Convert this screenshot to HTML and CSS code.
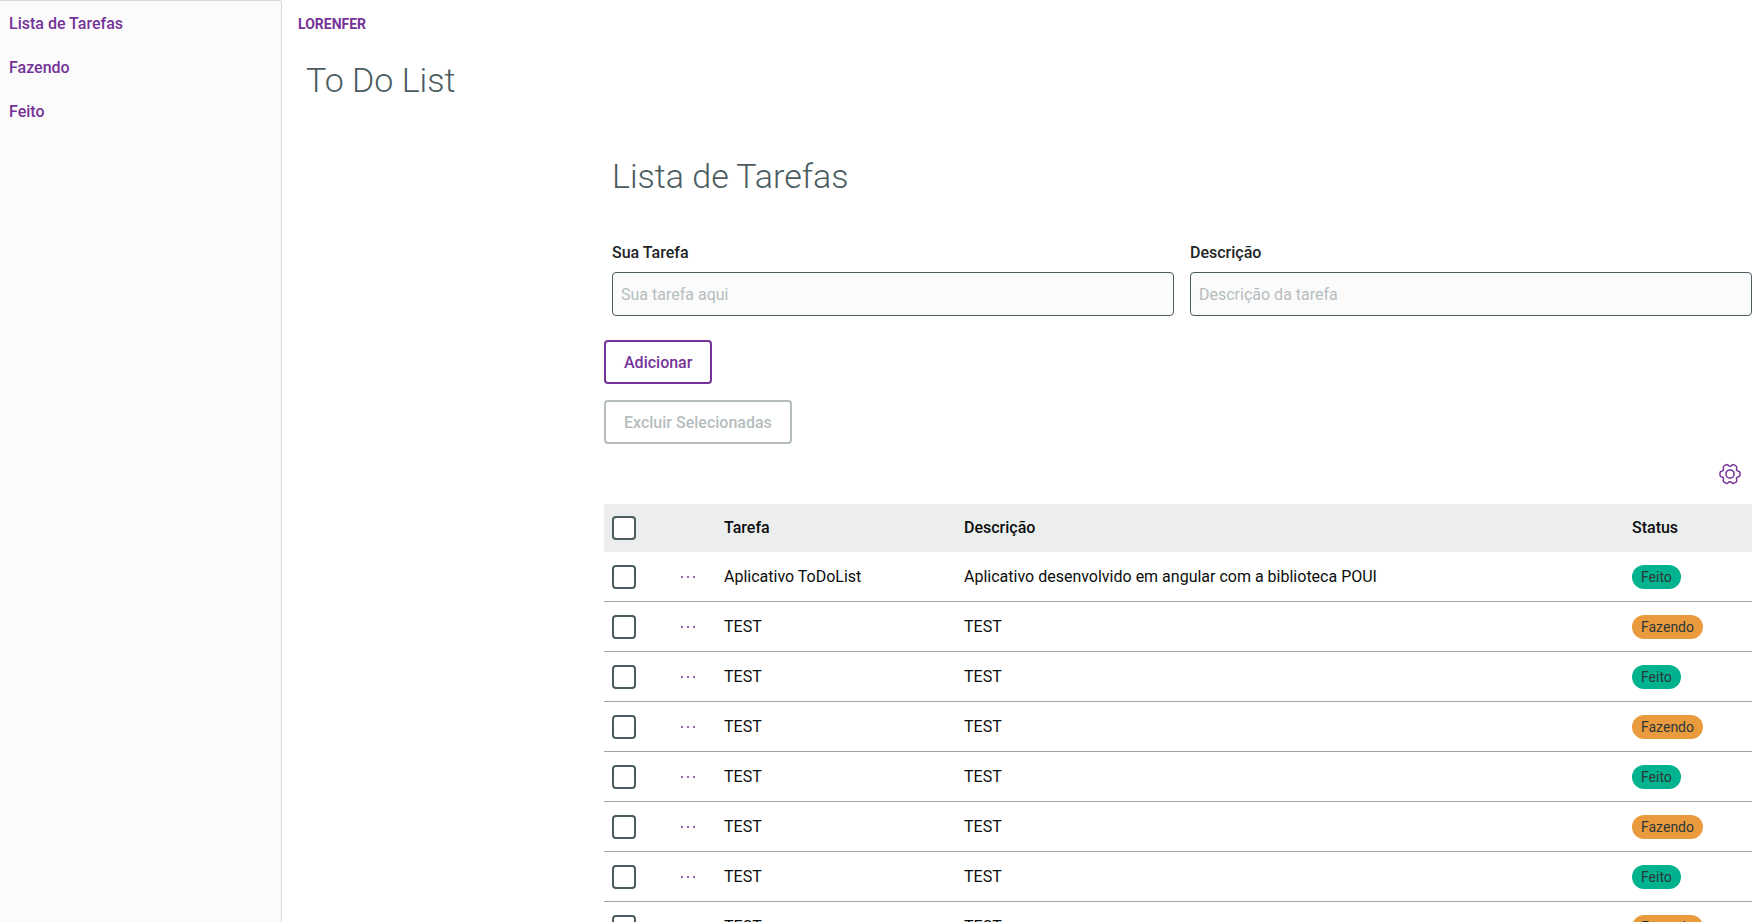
FILE: index.html
```html
<!DOCTYPE html>
<html lang="pt-BR">
<head>
<meta charset="utf-8">
<title>To Do List</title>
<link rel="stylesheet" href="styles.css">
</head>
<body>
<div class="app">
  <nav class="sidebar">
    <a class="menu-item" href="#lista">Lista de Tarefas</a>
    <a class="menu-item" href="#fazendo">Fazendo</a>
    <a class="menu-item" href="#feito">Feito</a>
  </nav>
  <main class="main">
    <header class="toolbar">LORENFER</header>
    <h1 class="title page-title">To Do List</h1>
    <section class="content" id="lista">
      <h2 class="title">Lista de Tarefas</h2>
      <form class="form">
        <div class="field">
          <label class="label" for="tarefa">Sua Tarefa</label>
          <input class="input" id="tarefa" type="text" placeholder="Sua tarefa aqui">
        </div>
        <div class="field">
          <label class="label" for="descricao">Descrição</label>
          <input class="input" id="descricao" type="text" placeholder="Descrição da tarefa">
        </div>
      </form>
      <div class="actions">
        <button class="button" type="button">Adicionar</button>
        <button class="button" type="button" disabled>Excluir Selecionadas</button>
      </div>
      <div class="table-tools">
        <button class="icon-button" type="button" aria-label="Configurar colunas">
          <svg class="gear" viewBox="-12 -12 24 24" aria-hidden="true">
            <defs><path id="tooth" d="M10 -1V1Q10 2.3 8.6 2.8Q5.7 3.3 6.7 6.1Q7 7.5 5.9 8.2"/></defs>
            <use href="#tooth"/>
            <use href="#tooth" transform="rotate(60)"/>
            <use href="#tooth" transform="rotate(120)"/>
            <use href="#tooth" transform="rotate(180)"/>
            <use href="#tooth" transform="rotate(240)"/>
            <use href="#tooth" transform="rotate(300)"/>
            <circle r="4.1"/>
          </svg>
        </button>
      </div>
      <table class="table">
        <colgroup><col class="col-check"><col class="col-menu"><col class="col-task"><col><col class="col-status"></colgroup>
        <thead>
          <tr><th><input class="check" type="checkbox" aria-label="Selecionar todas"></th><th></th><th>Tarefa</th><th>Descrição</th><th>Status</th></tr>
        </thead>
        <tbody>
          <tr><td><input class="check" type="checkbox" aria-label="Selecionar tarefa"></td><td><button class="more" type="button" aria-label="Ações"><svg class="dots" viewBox="0 0 16 4"><circle cx="2" cy="2" r="1"/><circle cx="8" cy="2" r="1"/><circle cx="14" cy="2" r="1"/></svg></button></td><td>Aplicativo ToDoList</td><td>Aplicativo desenvolvido em angular com a biblioteca POUI</td><td><span class="tag done">Feito</span></td></tr>
          <tr><td><input class="check" type="checkbox" aria-label="Selecionar tarefa"></td><td><button class="more" type="button" aria-label="Ações"><svg class="dots" viewBox="0 0 16 4"><circle cx="2" cy="2" r="1"/><circle cx="8" cy="2" r="1"/><circle cx="14" cy="2" r="1"/></svg></button></td><td>TEST</td><td>TEST</td><td><span class="tag doing">Fazendo</span></td></tr>
          <tr><td><input class="check" type="checkbox" aria-label="Selecionar tarefa"></td><td><button class="more" type="button" aria-label="Ações"><svg class="dots" viewBox="0 0 16 4"><circle cx="2" cy="2" r="1"/><circle cx="8" cy="2" r="1"/><circle cx="14" cy="2" r="1"/></svg></button></td><td>TEST</td><td>TEST</td><td><span class="tag done">Feito</span></td></tr>
          <tr><td><input class="check" type="checkbox" aria-label="Selecionar tarefa"></td><td><button class="more" type="button" aria-label="Ações"><svg class="dots" viewBox="0 0 16 4"><circle cx="2" cy="2" r="1"/><circle cx="8" cy="2" r="1"/><circle cx="14" cy="2" r="1"/></svg></button></td><td>TEST</td><td>TEST</td><td><span class="tag doing">Fazendo</span></td></tr>
          <tr><td><input class="check" type="checkbox" aria-label="Selecionar tarefa"></td><td><button class="more" type="button" aria-label="Ações"><svg class="dots" viewBox="0 0 16 4"><circle cx="2" cy="2" r="1"/><circle cx="8" cy="2" r="1"/><circle cx="14" cy="2" r="1"/></svg></button></td><td>TEST</td><td>TEST</td><td><span class="tag done">Feito</span></td></tr>
          <tr><td><input class="check" type="checkbox" aria-label="Selecionar tarefa"></td><td><button class="more" type="button" aria-label="Ações"><svg class="dots" viewBox="0 0 16 4"><circle cx="2" cy="2" r="1"/><circle cx="8" cy="2" r="1"/><circle cx="14" cy="2" r="1"/></svg></button></td><td>TEST</td><td>TEST</td><td><span class="tag doing">Fazendo</span></td></tr>
          <tr><td><input class="check" type="checkbox" aria-label="Selecionar tarefa"></td><td><button class="more" type="button" aria-label="Ações"><svg class="dots" viewBox="0 0 16 4"><circle cx="2" cy="2" r="1"/><circle cx="8" cy="2" r="1"/><circle cx="14" cy="2" r="1"/></svg></button></td><td>TEST</td><td>TEST</td><td><span class="tag done">Feito</span></td></tr>
          <tr><td><input class="check" type="checkbox" aria-label="Selecionar tarefa"></td><td><button class="more" type="button" aria-label="Ações"><svg class="dots" viewBox="0 0 16 4"><circle cx="2" cy="2" r="1"/><circle cx="8" cy="2" r="1"/><circle cx="14" cy="2" r="1"/></svg></button></td><td>TEST</td><td>TEST</td><td><span class="tag doing">Fazendo</span></td></tr>
        </tbody>
      </table>
    </section>
  </main>
</div>
</body>
</html>
```
FILE: styles.css
```css
* { box-sizing: border-box; }

body {
  margin: 0;
  background: #fff;
  color: #0b0d0d;
  font: 400 16px/24px Roboto, sans-serif;
}

.app {
  display: flex;
  height: 100vh;
  overflow: hidden;
}

.sidebar {
  flex: 0 0 282px;
  background: #fbfbfb;
  border: 1px solid #d5d9da;
  border-width: 1px 1px 0 0;
  border-top-right-radius: 4px;
}

.menu-item {
  display: block;
  padding: 11px 9px 9px;
  color: #753399;
  font-weight: 500;
  text-decoration: none;
}

.main {
  flex: 1;
  min-width: 0;
  padding-left: 16px;
}

.toolbar {
  padding: 12px 0;
  color: #753399;
  font-size: 14px;
  font-weight: 700;
}

.title {
  margin: 0;
  padding: 0 8px;
  color: #4a5c60;
  font-size: 34px;
  font-weight: 350;
  line-height: 40px;
}

.page-title { padding-top: 12px; }

.content {
  margin-left: 306px;
  padding-top: 56px;
}

.form {
  display: grid;
  grid-template-columns: 1fr 1fr;
  gap: 16px;
  padding: 45px 0 24px 8px;
}

.field {
  display: flex;
  flex-direction: column;
  gap: 7px;
}

.label {
  color: #1d2426;
  font-weight: 500;
}

.input {
  width: 100%;
  height: 44px;
  padding: 0 8px;
  background: #fbfbfb;
  border: 1px solid #4a5c60;
  border-radius: 4px;
  font: inherit;
}

.input::placeholder { color: #b6bdbf; }

.actions {
  display: flex;
  flex-direction: column;
  align-items: flex-start;
  gap: 16px;
}

.button {
  height: 44px;
  padding: 2px 18px 0;
  background: #fff;
  border: 2px solid #753399;
  border-radius: 4px;
  color: #753399;
  font: inherit;
  font-weight: 500;
}

.button:disabled {
  border-color: #b6bdbf;
  color: #b6bdbf;
}

.table-tools {
  display: flex;
  justify-content: flex-end;
  padding: 18px 10px 18px 0;
}

.icon-button, .more {
  display: block;
  padding: 0;
  background: none;
  border: 0;
}

.gear {
  display: block;
  width: 24px;
  height: 24px;
  fill: none;
  stroke: #753399;
  stroke-width: 1.5;
}

.table {
  width: 100%;
  table-layout: fixed;
  border-collapse: separate;
  border-spacing: 0;
}

.col-check { width: 60px; }
.col-menu { width: 52px; }
.col-task { width: 240px; }
.col-status { width: 128px; }

.table th, .table td {
  padding: 0 8px;
  text-align: left;
  vertical-align: middle;
}

.table th {
  height: 48px;
  background: #ebeeed;
  font-weight: 500;
}

.table td {
  height: 50px;
  border-bottom: 1px solid #9da7a9;
}

.check {
  appearance: none;
  display: block;
  width: 24px;
  height: 24px;
  margin: 0;
  background: #fff;
  border: 2px solid #4a5c60;
  border-radius: 4px;
}

.more { margin-left: 8px; }

.dots {
  display: block;
  width: 16px;
  height: 4px;
  fill: #753399;
}

.tag {
  display: block;
  width: fit-content;
  padding: 0 9px;
  border-radius: 12px;
  color: #2c3739;
  font-size: 14px;
}

.done { background: #00b28e; }
.doing { background: #ea9b3e; }
```
